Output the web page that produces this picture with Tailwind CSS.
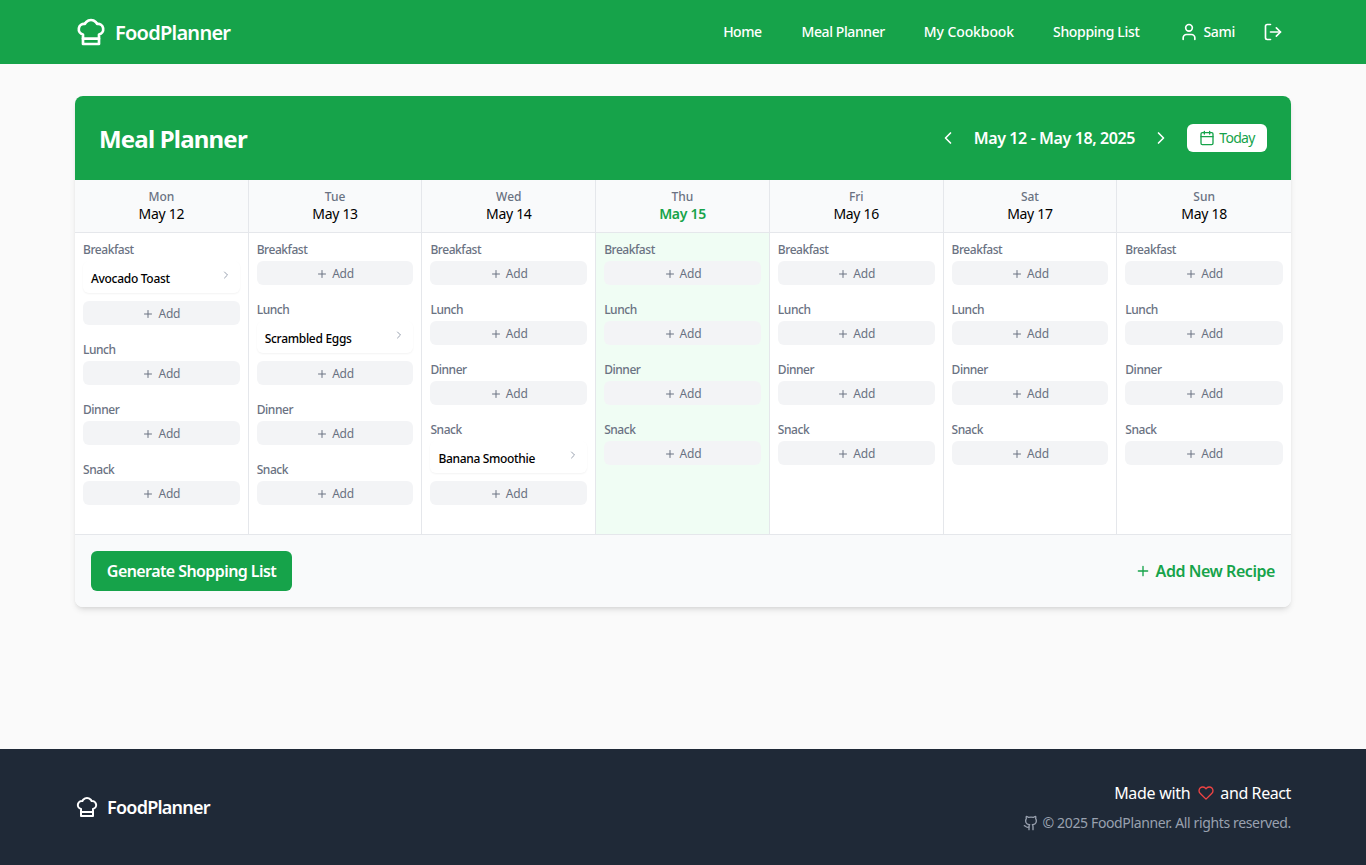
<!DOCTYPE html>
<html lang="en">
<head>
<meta charset="utf-8">
<title>FoodPlanner</title>
<script src="https://cdn.jsdelivr.net/npm/@tailwindcss/browser@4"></script>
</head>
<body class="bg-[#fafafa] font-['Noto_Sans',sans-serif] text-black">
<svg class="hidden">
<symbol id="plus" viewBox="0 0 24 24"><path d="M12 5v14M5 12h14"/></symbol>
<symbol id="chev" viewBox="0 0 24 24"><path d="m9 18 6-6-6-6"/></symbol>
<symbol id="hat" viewBox="0 0 24 24"><path d="M6 13.87A4 4 0 0 1 7.41 6a5.11 5.11 0 0 1 1.05-1.54 5 5 0 0 1 7.08 0A5.11 5.11 0 0 1 16.59 6 4 4 0 0 1 18 13.87V21H6Z"/><path d="M6 17h12"/></symbol>
</svg>
<div class="min-h-[865px] flex flex-col">
<header class="h-16 bg-[#16a34a] text-white">
  <div class="mx-auto w-[1280px] px-8 h-full flex items-center justify-between">
    <div class="flex items-center gap-2">
      <svg class="w-8 h-8" fill="none" stroke="currentColor" stroke-width="2" stroke-linecap="round" stroke-linejoin="round"><use href="#hat"/></svg>
      <span class="text-xl font-semibold tracking-[-0.75px] pt-0.5">FoodPlanner</span>
    </div>
    <nav class="flex items-center text-sm font-medium">
      <a class="mr-10 tracking-[-0.5px]">Home</a><a class="mr-[39px] tracking-[-0.4px]">Meal Planner</a><a class="mr-[39px] tracking-[-0.1px]">My Cookbook</a><a class="mr-10 tracking-[-0.33px]">Shopping List</a>
      <svg class="w-5 h-5 mr-1" viewBox="0 0 24 24" fill="none" stroke="currentColor" stroke-width="2" stroke-linecap="round" stroke-linejoin="round"><path d="M19 21v-2a4 4 0 0 0-4-4H9a4 4 0 0 0-4 4v2"/><circle cx="12" cy="7" r="4"/></svg>
      <span class="tracking-[-0.3px]">Sami</span>
      <svg class="w-5 h-5 ml-7 mr-2" viewBox="0 0 24 24" fill="none" stroke="currentColor" stroke-width="2" stroke-linecap="round" stroke-linejoin="round"><path d="M9 21H5a2 2 0 0 1-2-2V5a2 2 0 0 1 2-2h4"/><path d="m16 17 5-5-5-5"/><path d="M21 12H9"/></svg>
    </nav>
  </div>
</header>

<main class="flex-1 mx-auto w-[1280px] px-8 pt-8">
  <div class="rounded-lg bg-white shadow-md overflow-hidden">
    <div class="h-[84px] bg-[#16a34a] px-6 flex items-center justify-between text-white">
      <h1 class="text-2xl font-bold tracking-[-0.8px] pt-0.5">Meal Planner</h1>
      <div class="flex items-center">
        <svg class="w-5 h-5 mr-4" viewBox="0 0 24 24" fill="none" stroke="currentColor" stroke-width="2" stroke-linecap="round" stroke-linejoin="round"><path d="m15 18-6-6 6-6"/></svg>
        <span class="font-semibold tracking-[-0.4px]">May 12 - May 18, 2025</span>
        <svg class="w-5 h-5 ml-4 mr-4" viewBox="0 0 24 24" fill="none" stroke="currentColor" stroke-width="2" stroke-linecap="round" stroke-linejoin="round"><path d="m9 18 6-6-6-6"/></svg>
        <button class="h-7 w-20 rounded-md bg-white text-[#16a34a] text-sm flex items-center justify-center gap-1 tracking-[-0.7px]">
          <svg class="w-4 h-4" viewBox="0 0 24 24" fill="none" stroke="currentColor" stroke-width="2" stroke-linecap="round" stroke-linejoin="round"><rect x="3" y="4" width="18" height="18" rx="2"/><path d="M16 2v4M8 2v4M3 10h18"/></svg>Today</button>
      </div>
    </div>

    <div class="grid grid-cols-7">
      <!-- Mon -->
      <div class="border-r border-gray-200">
        <div class="h-[53px] bg-gray-50 border-b border-gray-200 flex flex-col items-center justify-center text-center"><div class="h-4 pt-px text-xs leading-4 font-medium text-gray-500">Mon</div><div class="text-sm leading-5 tracking-[-0.3px]">May 12</div></div>
        <div class="min-h-[301px] p-2">
          <div class="mb-4"><div class="h-4 pt-px text-xs leading-4 font-medium text-gray-500 mb-1 tracking-[-0.45px]">Breakfast</div>
            <div class="h-8 mb-2 rounded-md bg-white shadow-xs px-2 flex items-center justify-between text-xs font-medium tracking-[-0.3px]"><span class="pt-1">Avocado Toast</span><svg class="w-3 h-3 -mt-1 text-gray-400" fill="none" stroke="currentColor" stroke-width="2" stroke-linecap="round" stroke-linejoin="round"><use href="#chev"/></svg></div>
            <button class="w-full h-6 pt-0.5 rounded-md bg-gray-100 text-gray-500 text-xs flex items-center justify-center gap-1 tracking-[-0.2px]"><svg class="w-3 h-3" fill="none" stroke="currentColor" stroke-width="2" stroke-linecap="round"><use href="#plus"/></svg>Add</button></div>
          <div class="mb-4"><div class="h-4 pt-px text-xs leading-4 font-medium text-gray-500 mb-1 tracking-[-0.45px]">Lunch</div><button class="w-full h-6 pt-0.5 rounded-md bg-gray-100 text-gray-500 text-xs flex items-center justify-center gap-1 tracking-[-0.2px]"><svg class="w-3 h-3" fill="none" stroke="currentColor" stroke-width="2" stroke-linecap="round"><use href="#plus"/></svg>Add</button></div>
          <div class="mb-4"><div class="h-4 pt-px text-xs leading-4 font-medium text-gray-500 mb-1 tracking-[-0.45px]">Dinner</div><button class="w-full h-6 pt-0.5 rounded-md bg-gray-100 text-gray-500 text-xs flex items-center justify-center gap-1 tracking-[-0.2px]"><svg class="w-3 h-3" fill="none" stroke="currentColor" stroke-width="2" stroke-linecap="round"><use href="#plus"/></svg>Add</button></div>
          <div class="mb-4"><div class="h-4 pt-px text-xs leading-4 font-medium text-gray-500 mb-1 tracking-[-0.45px]">Snack</div><button class="w-full h-6 pt-0.5 rounded-md bg-gray-100 text-gray-500 text-xs flex items-center justify-center gap-1 tracking-[-0.2px]"><svg class="w-3 h-3" fill="none" stroke="currentColor" stroke-width="2" stroke-linecap="round"><use href="#plus"/></svg>Add</button></div>
        </div>
      </div>
      <!-- Tue -->
      <div class="border-r border-gray-200">
        <div class="h-[53px] bg-gray-50 border-b border-gray-200 flex flex-col items-center justify-center text-center"><div class="h-4 pt-px text-xs leading-4 font-medium text-gray-500">Tue</div><div class="text-sm leading-5 tracking-[-0.3px]">May 13</div></div>
        <div class="min-h-[301px] p-2">
          <div class="mb-4"><div class="h-4 pt-px text-xs leading-4 font-medium text-gray-500 mb-1 tracking-[-0.45px]">Breakfast</div><button class="w-full h-6 pt-0.5 rounded-md bg-gray-100 text-gray-500 text-xs flex items-center justify-center gap-1 tracking-[-0.2px]"><svg class="w-3 h-3" fill="none" stroke="currentColor" stroke-width="2" stroke-linecap="round"><use href="#plus"/></svg>Add</button></div>
          <div class="mb-4"><div class="h-4 pt-px text-xs leading-4 font-medium text-gray-500 mb-1 tracking-[-0.45px]">Lunch</div>
            <div class="h-8 mb-2 rounded-md bg-white shadow-xs px-2 flex items-center justify-between text-xs font-medium tracking-[-0.3px]"><span class="pt-1">Scrambled Eggs</span><svg class="w-3 h-3 -mt-1 text-gray-400" fill="none" stroke="currentColor" stroke-width="2" stroke-linecap="round" stroke-linejoin="round"><use href="#chev"/></svg></div>
            <button class="w-full h-6 pt-0.5 rounded-md bg-gray-100 text-gray-500 text-xs flex items-center justify-center gap-1 tracking-[-0.2px]"><svg class="w-3 h-3" fill="none" stroke="currentColor" stroke-width="2" stroke-linecap="round"><use href="#plus"/></svg>Add</button></div>
          <div class="mb-4"><div class="h-4 pt-px text-xs leading-4 font-medium text-gray-500 mb-1 tracking-[-0.45px]">Dinner</div><button class="w-full h-6 pt-0.5 rounded-md bg-gray-100 text-gray-500 text-xs flex items-center justify-center gap-1 tracking-[-0.2px]"><svg class="w-3 h-3" fill="none" stroke="currentColor" stroke-width="2" stroke-linecap="round"><use href="#plus"/></svg>Add</button></div>
          <div class="mb-4"><div class="h-4 pt-px text-xs leading-4 font-medium text-gray-500 mb-1 tracking-[-0.45px]">Snack</div><button class="w-full h-6 pt-0.5 rounded-md bg-gray-100 text-gray-500 text-xs flex items-center justify-center gap-1 tracking-[-0.2px]"><svg class="w-3 h-3" fill="none" stroke="currentColor" stroke-width="2" stroke-linecap="round"><use href="#plus"/></svg>Add</button></div>
        </div>
      </div>
      <!-- Wed -->
      <div class="border-r border-gray-200">
        <div class="h-[53px] bg-gray-50 border-b border-gray-200 flex flex-col items-center justify-center text-center"><div class="h-4 pt-px text-xs leading-4 font-medium text-gray-500">Wed</div><div class="text-sm leading-5 tracking-[-0.3px]">May 14</div></div>
        <div class="min-h-[301px] p-2">
          <div class="mb-4"><div class="h-4 pt-px text-xs leading-4 font-medium text-gray-500 mb-1 tracking-[-0.45px]">Breakfast</div><button class="w-full h-6 pt-0.5 rounded-md bg-gray-100 text-gray-500 text-xs flex items-center justify-center gap-1 tracking-[-0.2px]"><svg class="w-3 h-3" fill="none" stroke="currentColor" stroke-width="2" stroke-linecap="round"><use href="#plus"/></svg>Add</button></div>
          <div class="mb-4"><div class="h-4 pt-px text-xs leading-4 font-medium text-gray-500 mb-1 tracking-[-0.45px]">Lunch</div><button class="w-full h-6 pt-0.5 rounded-md bg-gray-100 text-gray-500 text-xs flex items-center justify-center gap-1 tracking-[-0.2px]"><svg class="w-3 h-3" fill="none" stroke="currentColor" stroke-width="2" stroke-linecap="round"><use href="#plus"/></svg>Add</button></div>
          <div class="mb-4"><div class="h-4 pt-px text-xs leading-4 font-medium text-gray-500 mb-1 tracking-[-0.45px]">Dinner</div><button class="w-full h-6 pt-0.5 rounded-md bg-gray-100 text-gray-500 text-xs flex items-center justify-center gap-1 tracking-[-0.2px]"><svg class="w-3 h-3" fill="none" stroke="currentColor" stroke-width="2" stroke-linecap="round"><use href="#plus"/></svg>Add</button></div>
          <div class="mb-4"><div class="h-4 pt-px text-xs leading-4 font-medium text-gray-500 mb-1 tracking-[-0.45px]">Snack</div>
            <div class="h-8 mb-2 rounded-md bg-white shadow-xs px-2 flex items-center justify-between text-xs font-medium tracking-[-0.33px]"><span class="pt-1">Banana Smoothie</span><svg class="w-3 h-3 -mt-1 text-gray-400" fill="none" stroke="currentColor" stroke-width="2" stroke-linecap="round" stroke-linejoin="round"><use href="#chev"/></svg></div>
            <button class="w-full h-6 pt-0.5 rounded-md bg-gray-100 text-gray-500 text-xs flex items-center justify-center gap-1 tracking-[-0.2px]"><svg class="w-3 h-3" fill="none" stroke="currentColor" stroke-width="2" stroke-linecap="round"><use href="#plus"/></svg>Add</button></div>
        </div>
      </div>
      <!-- Thu -->
      <div class="border-r border-gray-200">
        <div class="h-[53px] bg-gray-50 border-b border-gray-200 flex flex-col items-center justify-center text-center"><div class="h-4 pt-px text-xs leading-4 font-medium text-gray-500">Thu</div><div class="text-sm leading-5 font-semibold text-[#16a34a] tracking-[-0.3px]">May 15</div></div>
        <div class="min-h-[301px] p-2 h-[calc(100%-53px)] bg-[#f0fdf4]">
          <div class="mb-4"><div class="h-4 pt-px text-xs leading-4 font-medium text-gray-500 mb-1 tracking-[-0.45px]">Breakfast</div><button class="w-full h-6 pt-0.5 rounded-md bg-gray-100 text-gray-500 text-xs flex items-center justify-center gap-1 tracking-[-0.2px]"><svg class="w-3 h-3" fill="none" stroke="currentColor" stroke-width="2" stroke-linecap="round"><use href="#plus"/></svg>Add</button></div>
          <div class="mb-4"><div class="h-4 pt-px text-xs leading-4 font-medium text-gray-500 mb-1 tracking-[-0.45px]">Lunch</div><button class="w-full h-6 pt-0.5 rounded-md bg-gray-100 text-gray-500 text-xs flex items-center justify-center gap-1 tracking-[-0.2px]"><svg class="w-3 h-3" fill="none" stroke="currentColor" stroke-width="2" stroke-linecap="round"><use href="#plus"/></svg>Add</button></div>
          <div class="mb-4"><div class="h-4 pt-px text-xs leading-4 font-medium text-gray-500 mb-1 tracking-[-0.45px]">Dinner</div><button class="w-full h-6 pt-0.5 rounded-md bg-gray-100 text-gray-500 text-xs flex items-center justify-center gap-1 tracking-[-0.2px]"><svg class="w-3 h-3" fill="none" stroke="currentColor" stroke-width="2" stroke-linecap="round"><use href="#plus"/></svg>Add</button></div>
          <div class="mb-4"><div class="h-4 pt-px text-xs leading-4 font-medium text-gray-500 mb-1 tracking-[-0.45px]">Snack</div><button class="w-full h-6 pt-0.5 rounded-md bg-gray-100 text-gray-500 text-xs flex items-center justify-center gap-1 tracking-[-0.2px]"><svg class="w-3 h-3" fill="none" stroke="currentColor" stroke-width="2" stroke-linecap="round"><use href="#plus"/></svg>Add</button></div>
        </div>
      </div>
      <!-- Fri -->
      <div class="border-r border-gray-200">
        <div class="h-[53px] bg-gray-50 border-b border-gray-200 flex flex-col items-center justify-center text-center"><div class="h-4 pt-px text-xs leading-4 font-medium text-gray-500">Fri</div><div class="text-sm leading-5 tracking-[-0.3px]">May 16</div></div>
        <div class="min-h-[301px] p-2">
          <div class="mb-4"><div class="h-4 pt-px text-xs leading-4 font-medium text-gray-500 mb-1 tracking-[-0.45px]">Breakfast</div><button class="w-full h-6 pt-0.5 rounded-md bg-gray-100 text-gray-500 text-xs flex items-center justify-center gap-1 tracking-[-0.2px]"><svg class="w-3 h-3" fill="none" stroke="currentColor" stroke-width="2" stroke-linecap="round"><use href="#plus"/></svg>Add</button></div>
          <div class="mb-4"><div class="h-4 pt-px text-xs leading-4 font-medium text-gray-500 mb-1 tracking-[-0.45px]">Lunch</div><button class="w-full h-6 pt-0.5 rounded-md bg-gray-100 text-gray-500 text-xs flex items-center justify-center gap-1 tracking-[-0.2px]"><svg class="w-3 h-3" fill="none" stroke="currentColor" stroke-width="2" stroke-linecap="round"><use href="#plus"/></svg>Add</button></div>
          <div class="mb-4"><div class="h-4 pt-px text-xs leading-4 font-medium text-gray-500 mb-1 tracking-[-0.45px]">Dinner</div><button class="w-full h-6 pt-0.5 rounded-md bg-gray-100 text-gray-500 text-xs flex items-center justify-center gap-1 tracking-[-0.2px]"><svg class="w-3 h-3" fill="none" stroke="currentColor" stroke-width="2" stroke-linecap="round"><use href="#plus"/></svg>Add</button></div>
          <div class="mb-4"><div class="h-4 pt-px text-xs leading-4 font-medium text-gray-500 mb-1 tracking-[-0.45px]">Snack</div><button class="w-full h-6 pt-0.5 rounded-md bg-gray-100 text-gray-500 text-xs flex items-center justify-center gap-1 tracking-[-0.2px]"><svg class="w-3 h-3" fill="none" stroke="currentColor" stroke-width="2" stroke-linecap="round"><use href="#plus"/></svg>Add</button></div>
        </div>
      </div>
      <!-- Sat -->
      <div class="border-r border-gray-200">
        <div class="h-[53px] bg-gray-50 border-b border-gray-200 flex flex-col items-center justify-center text-center"><div class="h-4 pt-px text-xs leading-4 font-medium text-gray-500">Sat</div><div class="text-sm leading-5 tracking-[-0.3px]">May 17</div></div>
        <div class="min-h-[301px] p-2">
          <div class="mb-4"><div class="h-4 pt-px text-xs leading-4 font-medium text-gray-500 mb-1 tracking-[-0.45px]">Breakfast</div><button class="w-full h-6 pt-0.5 rounded-md bg-gray-100 text-gray-500 text-xs flex items-center justify-center gap-1 tracking-[-0.2px]"><svg class="w-3 h-3" fill="none" stroke="currentColor" stroke-width="2" stroke-linecap="round"><use href="#plus"/></svg>Add</button></div>
          <div class="mb-4"><div class="h-4 pt-px text-xs leading-4 font-medium text-gray-500 mb-1 tracking-[-0.45px]">Lunch</div><button class="w-full h-6 pt-0.5 rounded-md bg-gray-100 text-gray-500 text-xs flex items-center justify-center gap-1 tracking-[-0.2px]"><svg class="w-3 h-3" fill="none" stroke="currentColor" stroke-width="2" stroke-linecap="round"><use href="#plus"/></svg>Add</button></div>
          <div class="mb-4"><div class="h-4 pt-px text-xs leading-4 font-medium text-gray-500 mb-1 tracking-[-0.45px]">Dinner</div><button class="w-full h-6 pt-0.5 rounded-md bg-gray-100 text-gray-500 text-xs flex items-center justify-center gap-1 tracking-[-0.2px]"><svg class="w-3 h-3" fill="none" stroke="currentColor" stroke-width="2" stroke-linecap="round"><use href="#plus"/></svg>Add</button></div>
          <div class="mb-4"><div class="h-4 pt-px text-xs leading-4 font-medium text-gray-500 mb-1 tracking-[-0.45px]">Snack</div><button class="w-full h-6 pt-0.5 rounded-md bg-gray-100 text-gray-500 text-xs flex items-center justify-center gap-1 tracking-[-0.2px]"><svg class="w-3 h-3" fill="none" stroke="currentColor" stroke-width="2" stroke-linecap="round"><use href="#plus"/></svg>Add</button></div>
        </div>
      </div>
      <!-- Sun -->
      <div>
        <div class="h-[53px] bg-gray-50 border-b border-gray-200 flex flex-col items-center justify-center text-center"><div class="h-4 pt-px text-xs leading-4 font-medium text-gray-500">Sun</div><div class="text-sm leading-5 tracking-[-0.3px]">May 18</div></div>
        <div class="min-h-[301px] p-2">
          <div class="mb-4"><div class="h-4 pt-px text-xs leading-4 font-medium text-gray-500 mb-1 tracking-[-0.45px]">Breakfast</div><button class="w-full h-6 pt-0.5 rounded-md bg-gray-100 text-gray-500 text-xs flex items-center justify-center gap-1 tracking-[-0.2px]"><svg class="w-3 h-3" fill="none" stroke="currentColor" stroke-width="2" stroke-linecap="round"><use href="#plus"/></svg>Add</button></div>
          <div class="mb-4"><div class="h-4 pt-px text-xs leading-4 font-medium text-gray-500 mb-1 tracking-[-0.45px]">Lunch</div><button class="w-full h-6 pt-0.5 rounded-md bg-gray-100 text-gray-500 text-xs flex items-center justify-center gap-1 tracking-[-0.2px]"><svg class="w-3 h-3" fill="none" stroke="currentColor" stroke-width="2" stroke-linecap="round"><use href="#plus"/></svg>Add</button></div>
          <div class="mb-4"><div class="h-4 pt-px text-xs leading-4 font-medium text-gray-500 mb-1 tracking-[-0.45px]">Dinner</div><button class="w-full h-6 pt-0.5 rounded-md bg-gray-100 text-gray-500 text-xs flex items-center justify-center gap-1 tracking-[-0.2px]"><svg class="w-3 h-3" fill="none" stroke="currentColor" stroke-width="2" stroke-linecap="round"><use href="#plus"/></svg>Add</button></div>
          <div class="mb-4"><div class="h-4 pt-px text-xs leading-4 font-medium text-gray-500 mb-1 tracking-[-0.45px]">Snack</div><button class="w-full h-6 pt-0.5 rounded-md bg-gray-100 text-gray-500 text-xs flex items-center justify-center gap-1 tracking-[-0.2px]"><svg class="w-3 h-3" fill="none" stroke="currentColor" stroke-width="2" stroke-linecap="round"><use href="#plus"/></svg>Add</button></div>
        </div>
      </div>
    </div>

    <div class="h-[73px] border-t border-gray-200 bg-gray-50 px-4 flex items-center justify-between">
      <button class="h-10 w-[201px] rounded-md bg-[#16a34a] text-white font-semibold tracking-[-0.58px]">Generate Shopping List</button>
      <a class="flex items-center gap-[5px] text-[#16a34a] font-semibold tracking-[-0.45px]"><svg class="w-4 h-4" fill="none" stroke="currentColor" stroke-width="2" stroke-linecap="round"><use href="#plus"/></svg>Add New Recipe</a>
    </div>
  </div>
</main>

<footer class="h-[116px] bg-[#1f2937] text-white">
  <div class="mx-auto w-[1280px] px-8 h-full flex items-center justify-between">
    <div class="flex items-center gap-2">
      <svg class="w-6 h-6" fill="none" stroke="currentColor" stroke-width="2" stroke-linecap="round" stroke-linejoin="round"><use href="#hat"/></svg>
      <span class="text-lg font-semibold tracking-[-0.75px]">FoodPlanner</span>
    </div>
    <div class="flex flex-col items-end">
      <div class="flex items-center h-6 mb-2"><span class="tracking-[-0.3px]">Made with</span><svg class="w-4 h-4 ml-2 mr-1.5 text-[#ef4444]" viewBox="0 0 24 24" fill="none" stroke="currentColor" stroke-width="2" stroke-linecap="round" stroke-linejoin="round"><path d="M20.84 4.61a5.5 5.5 0 0 0-7.78 0L12 5.67l-1.06-1.06a5.5 5.5 0 0 0-7.78 7.78l1.06 1.06L12 21.23l7.78-7.78 1.06-1.06a5.5 5.5 0 0 0 0-7.78z"/></svg><span class="tracking-[-0.4px]">and React</span></div>
      <div class="flex items-center text-sm text-gray-400 tracking-[-0.36px]"><svg class="w-4 h-4 mr-1" viewBox="0 0 24 24" fill="none" stroke="currentColor" stroke-width="2" stroke-linecap="round" stroke-linejoin="round"><path d="M15 22v-4a4.8 4.8 0 0 0-1-3.5c3 0 6-2 6-5.5.08-1.25-.27-2.48-1-3.5.28-1.15.28-2.35 0-3.5 0 0-1 0-3 1.5-2.64-.5-5.36-.5-8 0C6 2 5 2 5 2c-.3 1.15-.3 2.35 0 3.5A5.403 5.403 0 0 0 4 9c0 3.5 3 5.5 6 5.5-.39.49-.68 1.05-.85 1.65-.17.6-.22 1.23-.15 1.85v4"/><path d="M9 18c-4.51 2-5-2-7-2"/></svg>© 2025 FoodPlanner. All rights reserved.</div>
    </div>
  </div>
</footer>
</div>
</body>
</html>
